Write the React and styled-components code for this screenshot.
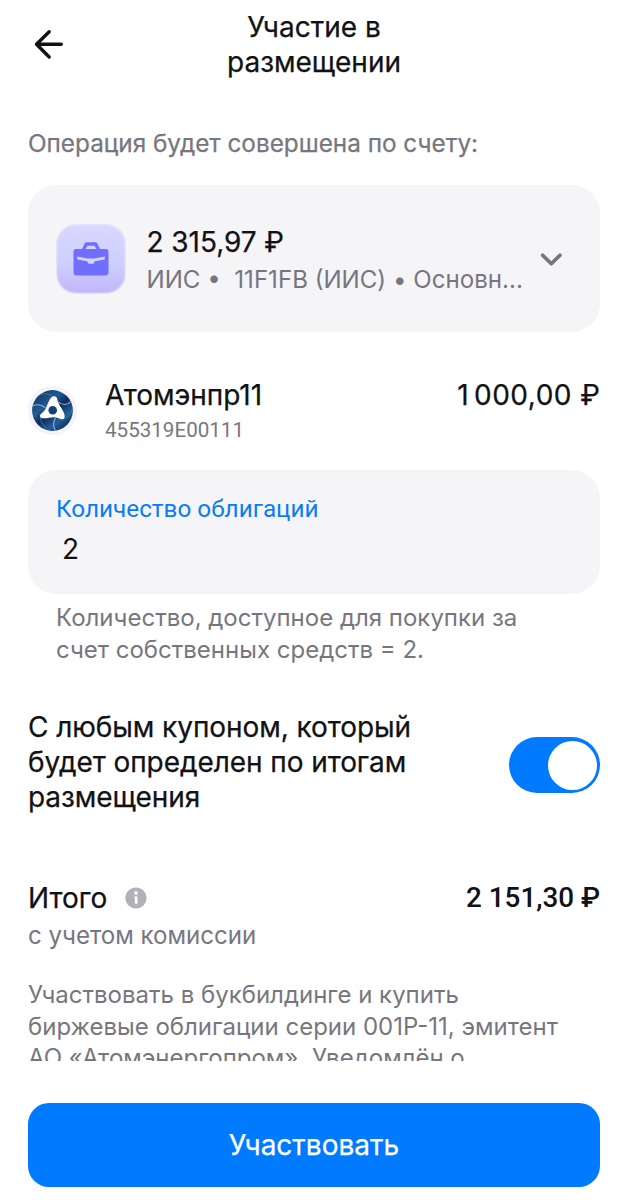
import styled, { createGlobalStyle } from "styled-components"

const EstiloGlobal = createGlobalStyle`
    * {
        box-sizing: border-box;
    }
    body {
        margin: 0;
        background: #fff;
        color: #111216;
        font-family: Inter, sans-serif;
    }
`

const Tela = styled.main`
    display: flex;
    flex-direction: column;
    width: 628px;
    height: 1200px;
    padding: 10px 28px 13px;
    overflow: hidden;
`

const Cabecalho = styled.header`
    display: grid;
    grid-template-columns: 42px 1fr 42px;
    align-items: center;
    height: 70px;
`

const BotaoVoltar = styled.button`
    display: flex;
    width: 42px;
    height: 42px;
    margin-top: -4px;
    padding: 0;
    border: 0;
    background: none;
    color: #111216;
`

const Titulo = styled.h1`
    margin: 0;
    font-size: 28px;
    font-weight: 400;
    line-height: 35px;
    text-align: center;
    -webkit-text-stroke: 0.25px currentColor;
`

const Texto = styled.p`
    margin: 0;
    color: #777680;
    font-size: ${({ $tamanho }) => $tamanho || 24.3}px;
    line-height: 31px;
    white-space: nowrap;
`

const Operacao = styled(Texto)`
    margin-top: 48px;
    -webkit-text-stroke: 0.25px currentColor;
`

const Destaque = styled.div`
    font-size: 28px;
    font-weight: 400;
    line-height: 35px;
    letter-spacing: ${({ $espaco }) => $espaco || 0}px;
    white-space: nowrap;
    -webkit-text-stroke: 0.25px currentColor;
`

const CartaoConta = styled.section`
    display: flex;
    align-items: center;
    height: 147px;
    margin-top: 26px;
    padding: 0 37px 0 28px;
    border-radius: 28px;
    background: #f5f5f8;
`

const IconeConta = styled.div`
    display: flex;
    align-items: center;
    justify-content: center;
    width: 70px;
    height: 70px;
    border: 1px solid #e6e2fb;
    border-radius: 20px;
    background: linear-gradient(180deg, #d8d7ff 0%, #ced0ff 55%, #c2b5fb 100%);
    box-shadow: inset 0 0 2px #efeaff;
`

const DadosConta = styled.div`
    display: flex;
    flex-direction: column;
    flex: 1;
    gap: 4px;
    min-width: 0;
    padding: 2px 0 0 20.5px;
`

const Linha = styled.section`
    display: flex;
    align-items: center;
    justify-content: space-between;
    margin-top: ${({ $topo }) => $topo}px;
`

const Papel = styled.div`
    flex: 1;
    padding: 2px 0 0 28px;
`

const Codigo = styled.div`
    margin-top: 3px;
    color: #777680;
    font-family: Roboto, sans-serif;
    font-size: 20.6px;
    line-height: 28px;
`

const Preco = styled(Destaque)`
    align-self: flex-start;
    margin: 2px -0.5px 0 0;
`

const EspacoFino = styled.span`
    word-spacing: -3.5px;
`

const CampoQuantidade = styled.section`
    height: 124px;
    margin-top: 26px;
    padding: 23px 28px 0;
    border-radius: 28px;
    background: #f5f5f8;
`

const Rotulo = styled.label`
    display: block;
    color: #0a7cf5;
    font-family: Roboto, sans-serif;
    font-size: 24.3px;
    line-height: 31px;
`

const Valor = styled(Destaque)`
    margin-top: 8px;
    padding-left: 6px;
    -webkit-text-stroke: 0;
`

const Ajuda = styled(Texto)`
    margin: 8px 28px 0;
    line-height: 31.5px;
`

const Interruptor = styled.button`
    display: flex;
    justify-content: flex-end;
    align-items: center;
    width: 91px;
    height: 56px;
    margin-top: 5px;
    padding: 0 3px;
    border: 0;
    border-radius: 28px;
    background: #007aff;
`

const Bolinha = styled.span`
    width: 49px;
    height: 49px;
    border-radius: 50%;
    background: #fff;
`

const TituloTotal = styled.div`
    display: flex;
    align-items: center;
    gap: 18px;

    svg {
        margin-bottom: 2px;
    }
`

const ValorTotal = styled(Destaque)`
    margin-bottom: 2px;
    font-family: Roboto, sans-serif;
    font-size: 27.8px;
    font-weight: 500;
    -webkit-text-stroke: 0;
`

const Comissao = styled(Texto)`
    margin-top: 3px;
`

const Descricao = styled(Texto)`
    height: 82px;
    margin-top: 28px;
    line-height: 31.5px;
    overflow: hidden;
`

const BotaoParticipar = styled.button`
    height: 84px;
    margin-top: auto;
    padding: 0;
    border: 0;
    border-radius: 21px;
    background: #007aff;
    color: #fff;
    font-family: Inter, sans-serif;
    font-size: 28px;
    line-height: 35px;
    -webkit-text-stroke: 0.25px currentColor;
`

const IconeSeta = () => (
    <svg width="42" height="42" viewBox="0 0 42 42" fill="none" stroke="currentColor" strokeWidth="3.4" strokeLinecap="round" strokeLinejoin="round">
        <path d="M33.3 22.3H8.5M21.2 9.8L8.5 22.3L21.2 35" />
    </svg>
)

const IconeMaleta = () => (
    <svg width="36" height="36" viewBox="0 0 36 36">
        <path fillRule="evenodd" fill="#706eff" d="M9 8L11.8 2.3Q12.3 1.2 13.6 1.2H22.2Q23.5 1.2 24.1 2.3L27 8H33Q35.5 8 35.5 10.5V31.5Q35.5 34.5 32.5 34.5H3.5Q.5 34.5 .5 31.5V10.5Q.5 8 3 8ZM14.5 4.7L12.5 8H23.5L21.5 4.7Z" />
        <path fill="#d4d4ff" d="M4.2 15.5L14.4 17.5H21.6L31.8 15.5V18.4L21.8 20.2L20.5 22.8H15.5L14.2 20.2L4.2 18.4Z" />
    </svg>
)

const IconeChevron = () => (
    <svg width="23" height="17" viewBox="0 0 23 17" fill="none" stroke="#777680" strokeWidth="3.7" strokeLinecap="round" strokeLinejoin="round">
        <path d="M2.6 5.2L11.3 13.8L20 5.2" />
    </svg>
)

const LogoAtom = () => (
    <svg width="49" height="49" viewBox="0 0 48 48">
        <defs>
            <linearGradient id="azul" x1="0.15" y1="0.1" x2="0.85" y2="0.95">
                <stop offset="0" stopColor="#143a66" />
                <stop offset="0.3" stopColor="#215b96" />
                <stop offset="0.5" stopColor="#0e2b5a" />
                <stop offset="0.75" stopColor="#245f99" />
                <stop offset="1" stopColor="#0c2852" />
            </linearGradient>
        </defs>
        <circle cx="24" cy="24" r="24" fill="#f3f3f9" />
        <circle cx="24" cy="24" r="20" fill="url(#azul)" />
        <path d="M41.5 15.5C38.5 19 33.5 19 29.5 15.5M26.8 43.5C24.3 39.5 24.8 35 27 31M4.8 19.5C9.5 17.5 14 18.7 17 21.5" fill="none" stroke="#8fb8d8" strokeWidth="1" />
        <path d="M25 10.5C20 6.5 14.5 7 10.5 9.5M35.5 32C39.5 30.5 42 27.5 43 24M12 31C12.5 35 15 39 18 41.5" fill="none" stroke="#3f78ad" strokeWidth="0.9" />
        <path d="M25.5 10C27.3 10 28.3 11.2 28.6 12.8C29.5 18 33 21.3 35 26C36.1 28.8 36.5 30.8 35 32C33.7 33.2 32 32.5 30.5 31.8C25 29.3 21 31.5 16 31.7C13.5 31.8 11.8 31.2 11.7 29.5C11.6 28 13 27 14 26.2C18.5 22.5 18.4 18 21.5 13C22.6 11.2 24 10 25.5 10Z" fill="#fff" />
        <circle cx="24.2" cy="23.8" r="4.2" fill="#163f76" />
    </svg>
)

const IconeInfo = () => (
    <svg width="22" height="22" viewBox="0 0 22 22">
        <circle cx="11" cy="11" r="10.6" fill="#b1b1b8" />
        <circle cx="11" cy="6.1" r="1.8" fill="#fff" />
        <path d="M9.3 9.5H12.5V16.8H9.9V11.3H9.3Z" fill="#fff" />
    </svg>
)

const App = () => {

    return (<>
        <EstiloGlobal />
        <Tela>
            <Cabecalho>
                <BotaoVoltar>
                    <IconeSeta />
                </BotaoVoltar>
                <Titulo>
                    Участие в<br />размещении
                </Titulo>
            </Cabecalho>
            <Operacao>Операция будет совершена по счету:</Operacao>
            <CartaoConta>
                <IconeConta>
                    <IconeMaleta />
                </IconeConta>
                <DadosConta>
                    <Destaque $espaco={-0.05}>2 315,97 ₽</Destaque>
                    <Texto $tamanho={24.1}>
                        ИИС •&nbsp; 11F1FB (ИИС) • Основн...
                    </Texto>
                </DadosConta>
                <IconeChevron />
            </CartaoConta>
            <Linha $topo={44}>
                <LogoAtom />
                <Papel>
                    <Destaque $espaco={-0.05}>Атомэнпр11</Destaque>
                    <Codigo>455319E00111</Codigo>
                </Papel>
                <Preco $espaco={0.5}>
                    <EspacoFino>1 </EspacoFino>000,00 ₽
                </Preco>
            </Linha>
            <CampoQuantidade>
                <Rotulo>Количество облигаций</Rotulo>
                <Valor>2</Valor>
            </CampoQuantidade>
            <Ajuda $tamanho={24}>
                Количество, доступное для покупки за<br />
                счет собственных средств = 2.
            </Ajuda>
            <Linha $topo={45}>
                <Destaque $espaco={-0.07}>
                    С любым купоном, который<br />
                    будет определен по итогам<br />
                    размещения
                </Destaque>
                <Interruptor>
                    <Bolinha />
                </Interruptor>
            </Linha>
            <Linha $topo={65}>
                <TituloTotal>
                    <Destaque>Итого</Destaque>
                    <IconeInfo />
                </TituloTotal>
                <ValorTotal>2 151,30 ₽</ValorTotal>
            </Linha>
            <Comissao $tamanho={24.1}>с учетом комиссии</Comissao>
            <Descricao $tamanho={24}>
                Участвовать в букбилдинге и купить<br />
                биржевые облигации серии 001P-11, эмитент<br />
                АО «Атомэнергопром». Уведомлён о
            </Descricao>
            <BotaoParticipar>Участвовать</BotaoParticipar>
        </Tela>
    </>)
}

export default App
